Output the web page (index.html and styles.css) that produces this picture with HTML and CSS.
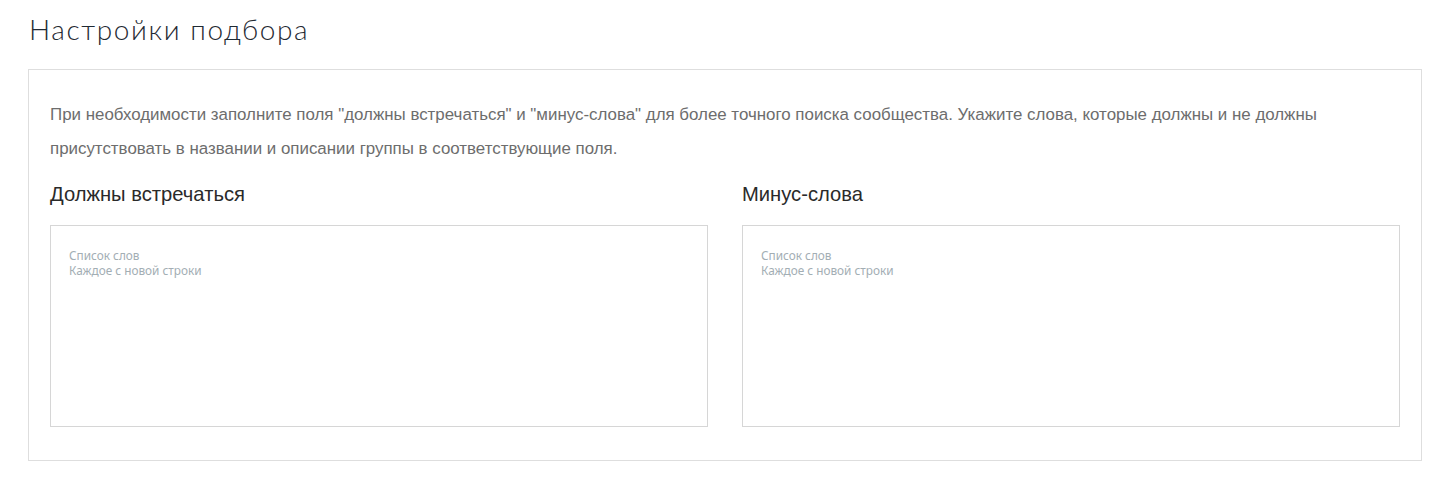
FILE: index.html
```html
<!DOCTYPE html>
<html lang="ru">
<head>
<meta charset="utf-8">
<link rel="stylesheet" href="styles.css">
</head>
<body>
<div class="page">
  <h1 class="title">Настройки подбора</h1>
  <div class="panel">
    <p class="intro">При необходимости заполните поля "должны встречаться" и "минус-слова" для более точного поиска сообщества. Укажите слова, которые должны и не должны присутствовать в названии и описании группы в соответствующие поля.</p>
    <div class="cols">
      <div class="col">
        <h2 class="label">Должны встречаться</h2>
        <textarea class="words" placeholder="Список слов&#10;Каждое с новой строки"></textarea>
      </div>
      <div class="col">
        <h2 class="label">Минус-слова</h2>
        <textarea class="words" placeholder="Список слов&#10;Каждое с новой строки"></textarea>
      </div>
    </div>
  </div>
</div>
</body>
</html>
```
FILE: styles.css
```css
html, body {
  margin: 0;
  background: #fff;
}
.page {
  padding: 11px 24px 0 28px;
}
.title {
  margin: 0 0 22px 1px;
  font-family: "Lato", "Open Sans", sans-serif;
  font-weight: 300;
  font-size: 28px;
  line-height: 36px;
  letter-spacing: 1.6px;
  color: #1f2a33;
}
.panel {
  border: 1px solid #dedede;
  padding: 28px 21px 33px 21px;
}
.intro {
  margin: 0;
  font-family: "Liberation Sans", Arial, sans-serif;
  font-size: 16.9px;
  line-height: 34px;
  color: #6d6d6d;
}
.cols {
  display: grid;
  grid-template-columns: 1fr 1fr;
  column-gap: 34px;
  margin-top: 14px;
}
.label {
  margin: 0 0 17px 0;
  font-family: "Liberation Sans", Arial, sans-serif;
  font-weight: 400;
  font-size: 20.2px;
  line-height: 28px;
  color: #2a2a2a;
}
.words {
  display: block;
  box-sizing: border-box;
  width: 100%;
  height: 202px;
  margin: 0;
  border: 1px solid #d6d6d6;
  border-radius: 0;
  padding: 22px 18px;
  resize: none;
  font-family: "Noto Sans", "Open Sans", sans-serif;
  font-size: 11.8px;
  line-height: 15px;
  color: #333;
  background: #fff;
}
.words::placeholder {
  color: #a3aeb4;
  opacity: 1;
}
```
